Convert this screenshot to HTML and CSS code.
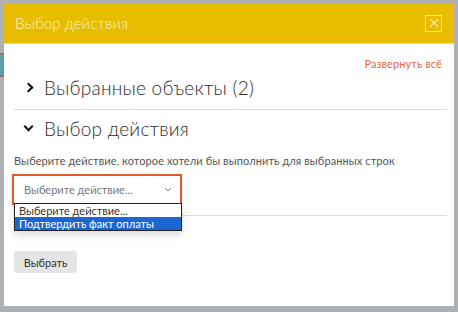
FILE: index.html
```html
<!DOCTYPE html>
<html lang="ru">
<head>
  <meta charset="UTF-8" />
  <title>Выбор действия</title>
  <link rel="stylesheet" href="styles.css">
</head>
<body>
  <div class="edge-strip"></div>
  <div class="modal">
    <div class="modal-header">
      <span class="modal-title">Выбор действия</span>
      <button class="close-btn" aria-label="Закрыть">
        <svg width="10" height="10" viewBox="0 0 10 10"><path d="M1 1L9 9M9 1L1 9" stroke="#f6e7a6" stroke-width="1.2" fill="none"/></svg>
      </button>
    </div>
    <div class="modal-body">
      <div class="expand-row"><a href="#" class="expand-link">Развернуть всё</a></div>

      <div class="section">
        <span class="chevron chevron-right"></span>
        <span class="section-title">Выбранные объекты (2)</span>
      </div>

      <div class="section section-open">
        <span class="chevron chevron-down"></span>
        <span class="section-title">Выбор действия</span>
      </div>

      <p class="hint">Выберите действие, которое хотели бы выполнить для выбранных строк</p>

      <div class="select-wrap">
        <div class="fake-select">
          <span>Выберите действие...</span>
          <svg width="8" height="5" viewBox="0 0 8 5"><path d="M1 1L4 4L7 1" stroke="#777" stroke-width="1" fill="none"/></svg>
        </div>
        <ul class="select-list">
          <li>Выберите действие...</li>
          <li class="active">Подтвердить факт оплаты</li>
        </ul>
      </div>

      <div class="divider"></div>

      <button class="choose-btn">Выбрать</button>
    </div>
  </div>
</body>
</html>
```

FILE: styles.css
```css
* {
  box-sizing: border-box;
}

html, body {
  margin: 0;
  padding: 0;
  height: 100%;
  overflow: hidden;
}

body {
  background: #adb0b3;
  font-family: 'Lato', 'Open Sans', sans-serif;
  padding: 3px 4px 6px 4px;
  position: relative;
}

.edge-strip {
  position: absolute;
  left: 0;
  top: 53px;
  width: 4px;
  height: 24px;
  background: #5b9fb5;
  border-top: 2px solid #a0705a;
  border-bottom: 2px solid #a0705a;
}

.modal {
  width: 450px;
  height: 303px;
  background: #fff;
  display: flex;
  flex-direction: column;
}

.modal-header {
  height: 41px;
  background: #e8bd00;
  border-bottom: 1px solid #f3dc80;
  display: flex;
  align-items: center;
  justify-content: space-between;
  padding: 0 12px 0 11px;
}

.modal-title {
  color: #fbf1c8;
  font-size: 15px;
  font-weight: 300;
  letter-spacing: 0.1px;
}

.close-btn {
  width: 17px;
  height: 17px;
  border: 1px solid #f6e7a6;
  background: transparent;
  padding: 0;
  display: flex;
  align-items: center;
  justify-content: center;
  cursor: pointer;
}

.modal-body {
  padding: 0 7px 0 10px;
  flex: 1;
}

.expand-row {
  display: flex;
  justify-content: flex-end;
  padding: 13px 5px 0 0;
  height: 27px;
}

.expand-link {
  color: #e0693e;
  font-size: 11px;
  letter-spacing: 0.1px;
  text-decoration: none;
}

.section {
  display: flex;
  align-items: center;
  height: 39px;
  padding-left: 11px;
  padding-bottom: 6px;
  border-bottom: 1px solid #dcdcdc;
}

.section-open {
  border-bottom: none;
  height: 41px;
  padding-bottom: 4px;
}

.section-title {
  font-size: 19px;
  font-weight: 300;
  color: #2b2b2b;
  margin-left: 12px;
  letter-spacing: 0.25px;
}

.chevron {
  width: 7px;
  height: 7px;
  border-right: 2.5px solid #111;
  border-bottom: 2.5px solid #111;
  display: inline-block;
}

.chevron-right {
  transform: rotate(-45deg);
}

.chevron-down {
  transform: rotate(45deg);
  margin-top: -4px;
}

.hint {
  margin: 3px 0 0 0;
  font-size: 11px;
  color: #555;
  letter-spacing: 0.1px;
}

.select-wrap {
  position: relative;
  margin-top: 7px;
  width: 170px;
  margin-left: -2px;
}

.fake-select {
  height: 31px;
  border: 2px solid #e05a2b;
  display: flex;
  align-items: center;
  justify-content: space-between;
  padding: 0 8px 0 10px;
  font-size: 11px;
  color: #777;
  box-shadow: 0 1px 3px rgba(0, 0, 0, 0.15);
}

.select-list {
  position: absolute;
  top: 29px;
  left: 2px;
  width: 168px;
  margin: 0;
  padding: 0;
  list-style: none;
  background: #fff;
  border: 1px solid #222;
  font-size: 11px;
  color: #333;
  box-shadow: 0 4px 8px rgba(0, 0, 0, 0.15);
  z-index: 2;
}

.select-list li {
  height: 13px;
  line-height: 13px;
  padding-left: 4px;
}

.select-list li.active {
  background: #1b66d1;
  color: #fff;
}

.divider {
  margin-top: 10px;
  border-top: 1px solid #dcdcdc;
}

.choose-btn {
  margin-top: 35px;
  margin-left: 0;
  width: 63px;
  height: 22px;
  background: #e5e5e5;
  border: none;
  border-radius: 3px;
  color: #333;
  font-family: 'Lato', sans-serif;
  font-size: 11px;
  padding: 0;
}
```
